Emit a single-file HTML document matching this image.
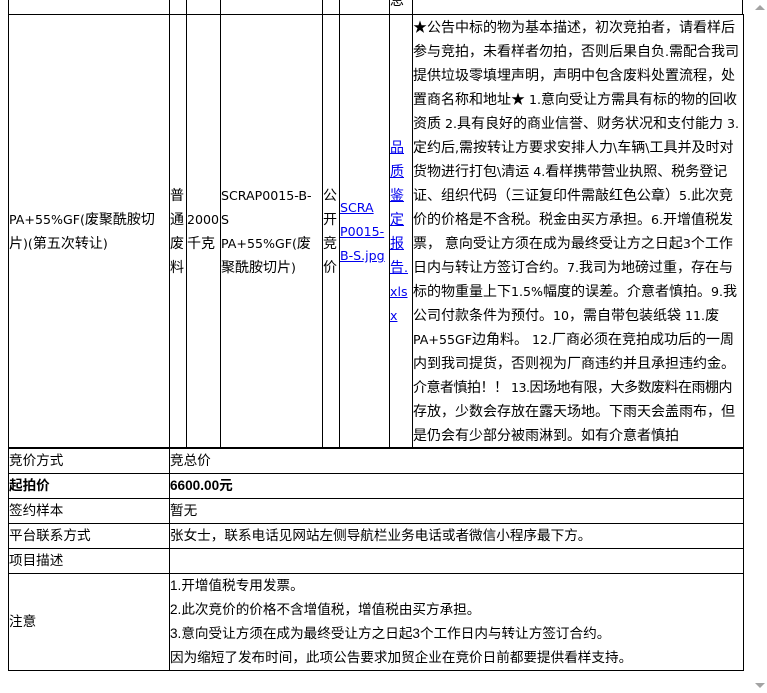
<!DOCTYPE html>
<html><head><meta charset="utf-8"><style>
body{margin:0;width:767px;height:693px;overflow:hidden;background:#fff;position:relative;font-family:"Liberation Sans","Noto Sans CJK SC",sans-serif;color:#000}
table{border-collapse:collapse;position:absolute;table-layout:fixed}
td{border:1px solid #000;padding:0;vertical-align:middle;font-size:14px;line-height:24px;word-break:break-all}
.l{font-family:"DejaVu Sans",sans-serif;font-size:12.6px;line-height:1}
.n{white-space:nowrap}
.t{white-space:nowrap;letter-spacing:-0.5px}
a{color:#00e;text-decoration:underline}
#t1{left:8px;top:14px;width:735px}
#t2{left:8px;top:447px;width:735px;border-top:2px solid #000}
#t2 td{font-size:13.6px;height:24px;line-height:24px}
.vl{position:absolute;top:0;height:14px;width:1px;background:#000}
#sb{position:absolute;left:752px;top:0;width:15px;height:693px;background:#fff}
#th{position:absolute;left:755px;top:330px;width:9px;height:355px;background:#a3a3a3;border-radius:5px}
.box{height:432px;overflow:hidden;display:flex;flex-direction:column;justify-content:center}
</style></head><body>
<div class="vl" style="left:8px"></div><div class="vl" style="left:169px"></div><div class="vl" style="left:186px"></div><div class="vl" style="left:220px"></div><div class="vl" style="left:322px"></div><div class="vl" style="left:339px"></div><div class="vl" style="left:389px"></div><div class="vl" style="left:412px"></div><div class="vl" style="left:742px"></div>
<div style="position:absolute;left:390px;top:-12px;font-size:14px;line-height:24px">息</div>
<table id="t1"><colgroup><col style="width:161px"><col style="width:17px"><col style="width:34px"><col style="width:102px"><col style="width:17px"><col style="width:50px"><col style="width:23px"><col style="width:331px"></colgroup>
<tr><td><span class="l">PA+55%GF(</span>废聚酰胺切片<span class="l">)(</span>第五次转让<span class="l">)</span></td><td>普通废料</td><td><span class="l n">2000</span>千克</td><td><span class="l">SCRAP0015-B-<br>S</span><br><span class="l">PA+55%GF(</span>废聚酰胺切片<span class="l">)</span></td><td>公开竞价</td><td><a class="l">SCRA<br>P0015-<br>B-S.jpg</a></td><td><a>品质鉴定报告<span class="l">.xlsx</span></a></td><td><div class="box"><div>★公告中标的物为基本描述，初次竞拍者，请看样后参与竞拍，未看样者勿拍，否则后果自负<span class="l">.</span>需配合我司提供垃圾零填埋声明，声明中包含废料处置流程，处置商名称和地址★<span class="l"> 1.</span>意向受让方需具有标的物的回收资质<span class="l"> 2.</span>具有良好的商业信誉、财务状况和支付能力<span class="l"> 3.</span>定约后<span class="l">,</span>需按转让方要求安排人力<span class="l">\</span>车辆<span class="l">\</span>工具并及时对货物进行打包<span class="l">\</span>清运<span class="l"> 4.</span>看样携带营业执照、税务登记证、组织代码（三证复印件需敲红色公章）<span class="l">5.</span>此次竞价的价格是不含税。税金由买方承担。<span class="l">6.</span>开增值税发票， 意向受让方须在成为最终受让方之日起<span class="l">3</span>个工作日内与转让方签订合约。<span class="l">7.</span>我司为地磅过重，存在与标的物重量上下<span class="l">1.5%</span>幅度的误差。介意者慎拍。<span class="l">9.</span>我公司付款条件为预付。<span class="l">10</span>，需自带包装纸袋<span class="l"> 11.</span>废<br><span class="l n">PA+55GF</span>边角料。<span class="l"> 12.</span>厂商必须在竞拍成功后的一周<br>内到我司提货，否则视为厂商违约并且承担违约金。<br><span class="t">介意者慎拍！！<span class="l"> 13.</span>因场地有限，大多数废料在雨棚内</span><br>存放，少数会存放在露天场地。下雨天会盖雨布，但<br>是仍会有少部分被雨淋到。如有介意者慎拍</div></div></td></tr>
</table>
<table id="t2"><colgroup><col style="width:161px"><col style="width:574px"></colgroup>
<tr><td>竞价方式</td><td>竞总价</td></tr>
<tr><td><b>起拍价</b></td><td><b>6600.00元</b></td></tr>
<tr><td>签约样本</td><td>暂无</td></tr>
<tr><td>平台联系方式</td><td>张女士，联系电话见网站左侧导航栏业务电话或者微信小程序最下方。</td></tr>
<tr><td>项目描述</td><td></td></tr>
<tr><td>注意</td><td>1.开增值税专用发票。<br>2.此次竞价的价格不含增值税，增值税由买方承担。<br>3.意向受让方须在成为最终受让方之日起3个工作日内与转让方签订合约。<br>因为缩短了发布时间，此项公告要求加贸企业在竞价日前都要提供看样支持。</td></tr>
</table>
<div id="sb"><div style="position:absolute;left:3px;top:5px;border-left:5px solid transparent;border-right:5px solid transparent;border-bottom:5px solid #a3a3a3"></div><div id="th"></div><div style="position:absolute;left:3px;top:683px;border-left:5px solid transparent;border-right:5px solid transparent;border-top:5px solid #a3a3a3"></div></div>
</body></html>
